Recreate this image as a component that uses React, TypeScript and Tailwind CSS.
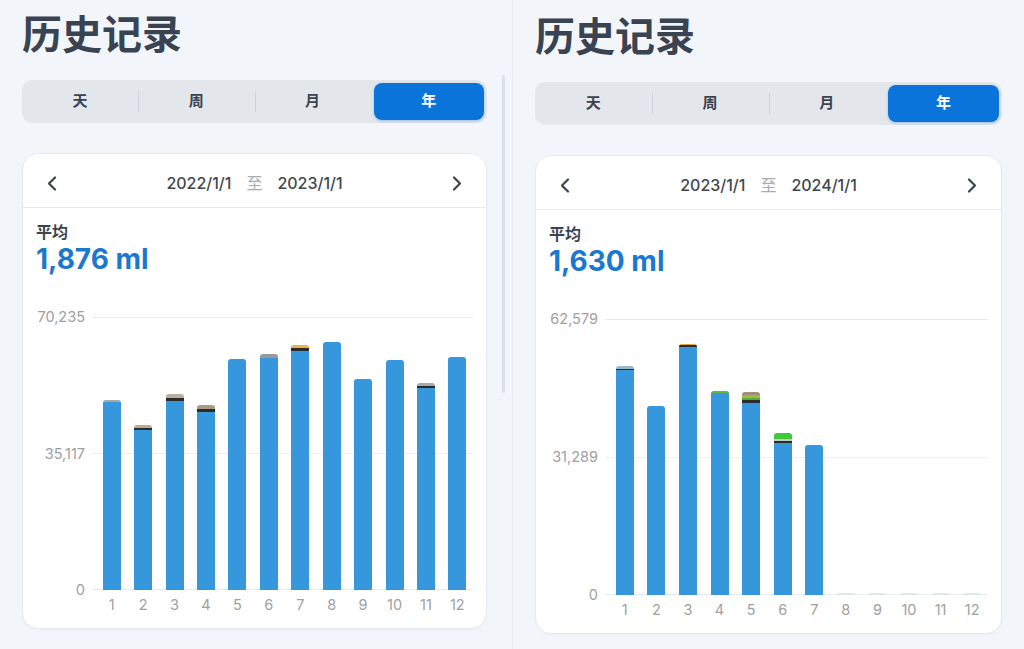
import React from 'react';

type Seg = { v: number; c: string };

const B = 'bg-[#3797dc]';

// stacked values in ml, bottom to top
const year2022: Seg[][] = [
  [{ v: 48370, c: B }, { v: 520, c: 'bg-[#a9a9a9]' }],
  [{ v: 41160, c: B }, { v: 510, c: 'bg-[#2b2b2b]' }, { v: 770, c: 'bg-[#b9aa90]' }],
  [{ v: 48620, c: B }, { v: 770, c: 'bg-[#2b2b2b]' }, { v: 1030, c: 'bg-[#bcb09c]' }],
  [{ v: 45790, c: B }, { v: 770, c: 'bg-[#2b2b2b]' }, { v: 1030, c: 'bg-[#ad9a82]' }],
  [{ v: 59430, c: B }],
  [{ v: 59690, c: B }, { v: 1030, c: 'bg-[#9a9a9a]' }],
  [{ v: 61490, c: B }, { v: 770, c: 'bg-[#2b2b2b]' }, { v: 770, c: 'bg-[#e6b548]' }],
  [{ v: 63800, c: B }],
  [{ v: 54280, c: B }],
  [{ v: 59170, c: B }],
  [{ v: 51970, c: B }, { v: 510, c: 'bg-[#2b2b2b]' }, { v: 770, c: 'bg-[#a8a8a8]' }],
  [{ v: 59940, c: B }],
];

const year2023: Seg[][] = [
  [{ v: 51020, c: B }, { v: 340, c: 'bg-[#2b2b2b]' }, { v: 680, c: 'bg-[#9db7c6]' }],
  [{ v: 42850, c: B }],
  [{ v: 56230, c: B }, { v: 450, c: 'bg-[#2b2b2b]' }, { v: 340, c: 'bg-[#e8a23a]' }],
  [{ v: 45800, c: B }, { v: 450, c: 'bg-[#5cb83a]' }],
  [
    { v: 43530, c: B },
    { v: 680, c: 'bg-[#2b2b2b]' },
    { v: 450, c: 'bg-[#4fae3a]' },
    { v: 680, c: 'bg-[#a5b83c]' },
    { v: 680, c: 'bg-[#a08c7c]' },
  ],
  [{ v: 34460, c: B }, { v: 450, c: 'bg-[#2b2b2b]' }, { v: 450, c: 'bg-[#c9c9c9]' }, { v: 1360, c: 'bg-[#3ec83a]' }],
  [{ v: 34010, c: B }],
  [],
  [],
  [],
  [],
  [],
];

const fmt = (n: number) => n.toLocaleString('en-US');

function Chevron({ dir }: { dir: 'left' | 'right' }) {
  return (
    <svg width="10" height="15" viewBox="0 0 10 15" fill="none" className="text-[#3b4350]">
      <path
        d={dir === 'left' ? 'M8 1.5 L2 7.5 L8 13.5' : 'M2 1.5 L8 7.5 L2 13.5'}
        stroke="currentColor"
        strokeWidth="2.2"
        strokeLinecap="round"
        strokeLinejoin="round"
      />
    </svg>
  );
}

function Tabs() {
  const tabs = ['天', '周', '月', '年'];
  return (
    <div className="flex h-[43px] items-stretch rounded-[10px] bg-[#e3e7ec]">
      {tabs.map((t, i) => (
        <div key={t} className="relative flex flex-1 items-center justify-center">
          {i > 0 && i < 3 && <div className="absolute left-0 top-[11px] h-[21px] w-px bg-[#cfd3d9]" />}
          {i === 3 ? (
            <div className="m-[3px] flex h-[37px] flex-1 items-center justify-center rounded-[8px] bg-[#0b74da] text-[15px] font-semibold text-white shadow-[0_1px_3px_rgba(11,116,218,0.35)]">
              {t}
            </div>
          ) : (
            <span className="text-[15px] font-semibold text-[#3b4350]">{t}</span>
          )}
        </div>
      ))}
    </div>
  );
}

interface ChartProps {
  bars: Seg[][];
  max: number;
  height: number;
  heightClass: string;
}

function Chart({ bars, max, height, heightClass }: ChartProps) {
  const ticks = [fmt(max), fmt(Math.floor(max / 2)), '0'];
  return (
    <div className="flex">
      <div className={`relative w-[49px] shrink-0 text-[14.5px] text-[#a0a0a0] ${heightClass}`}>
        <span className="absolute right-0 top-0 -translate-y-1/2 leading-none">{ticks[0]}</span>
        <span className="absolute right-0 top-1/2 -translate-y-1/2 leading-none">{ticks[1]}</span>
        <span className="absolute bottom-0 right-0 translate-y-1/2 leading-none">{ticks[2]}</span>
      </div>
      <div className="ml-[7px] flex-1">
        <div className={`relative ${heightClass}`}>
          <div className="absolute inset-0 flex flex-col justify-between">
            <div className="h-px bg-[#e6e9ee]" />
            <div className="h-px bg-[#eceef2]" />
            <div className="h-px bg-[#e6e9ee]" />
          </div>
          <div className="absolute inset-0 flex items-end pl-[4px]">
            {bars.map((segs, i) => (
              <div key={i} className="flex flex-1 justify-center">
                {segs.length === 0 ? (
                  <div className="h-[2px] w-[18px] rounded-t-[2px] bg-[#dfe6ee]" />
                ) : (
                  <div className="flex w-[18px] flex-col-reverse overflow-hidden rounded-t-[3px]">
                    {segs.map((s, j) => (
                      <div key={j} className={s.c} style={{ height: (s.v / max) * height }} />
                    ))}
                  </div>
                )}
              </div>
            ))}
          </div>
        </div>
        <div className="mt-[5px] flex pl-[4px]">
          {bars.map((_, i) => (
            <div key={i} className="flex-1 text-center text-[14.5px] leading-5 text-[#a0a0a0]">
              {i + 1}
            </div>
          ))}
        </div>
      </div>
    </div>
  );
}

interface PanelProps {
  from: string;
  to: string;
  avg: string;
  bars: Seg[][];
  max: number;
  height: number;
  heightClass: string;
  widthClass: string;
  shiftClass: string;
  scrollbar?: boolean;
}

function Panel({ from, to, avg, bars, max, height, heightClass, widthClass, shiftClass, scrollbar }: PanelProps) {
  return (
    <div className="relative h-[649px] w-[512px] shrink-0 overflow-hidden bg-[#f2f6fb]">
      <div className={`ml-[22px] ${widthClass} ${shiftClass}`}>
        <h1 className="text-[40px] font-bold leading-[40px] text-[#3a4351]">历史记录</h1>
        <div className="mt-[25px]">
          <Tabs />
        </div>
        <div className="mt-[30px] rounded-[16px] border border-[#e6eaf0] bg-white shadow-[0_1px_2px_rgba(30,50,80,0.04)]">
          <div className="flex h-[54px] items-center justify-between border-b border-[#e8ecf1] px-[24px] pt-[5px]">
            <Chevron dir="left" />
            <div className="flex items-center gap-[15px] text-[16px] font-medium text-[#40474f]">
              <span>{from}</span>
              <span className="font-normal text-[#a6abb2]">至</span>
              <span>{to}</span>
            </div>
            <Chevron dir="right" />
          </div>
          <div className="px-[13px] pb-[13px] pt-[14px]">
            <div className="text-[16px] font-bold leading-5 text-[#3d4450]">平均</div>
            <div className="mt-[1px] text-[28px] font-bold leading-8 text-[#1b78d0]">{avg}</div>
            <div className="mt-[42px]">
              <Chart bars={bars} max={max} height={height} heightClass={heightClass} />
            </div>
          </div>
        </div>
      </div>
      {scrollbar && <div className="absolute right-[7px] top-[75px] h-[318px] w-[3px] rounded-full bg-[#dbe0e6]" />}
    </div>
  );
}

export default function App() {
  return (
    <div className="flex h-[649px] w-[1024px] overflow-hidden bg-[#f2f6fb] font-[family-name:Inter,'Noto_Sans_CJK_SC',sans-serif]">
      <Panel
        from="2022/1/1"
        to="2023/1/1"
        avg="1,876 ml"
        bars={year2022}
        max={70235}
        height={273}
        heightClass="h-[273px]"
        widthClass="w-[465px]"
        shiftClass="pt-[15px]"
        scrollbar
      />
      <div className="w-px shrink-0 bg-[#e9edf2]" />
      <Panel
        from="2023/1/1"
        to="2024/1/1"
        avg="1,630 ml"
        bars={year2023}
        max={62579}
        height={276}
        heightClass="h-[276px]"
        widthClass="w-[467px]"
        shiftClass="pt-[17px]"
      />
    </div>
  );
}
